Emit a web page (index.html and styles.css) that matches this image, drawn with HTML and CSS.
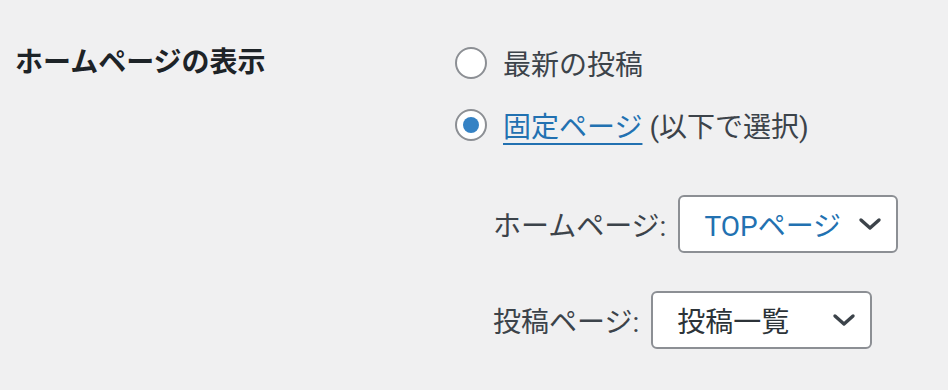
FILE: index.html
```html
<!DOCTYPE html>
<html lang="ja">
<head>
    <meta charset="UTF-8">
    <meta name="viewport" content="width=device-width, initial-scale=1.0">
    <title>表示設定</title>
    <link rel="stylesheet" href="styles.css">
</head>
<body>
    <div class="form-table">
        <div class="form-th">ホームページの表示</div>

        <div class="form-td">
            <div class="radio-list">
                <label class="radio-row">
                    <span class="radio"></span>
                    <span>最新の投稿</span>
                </label>
                <label class="radio-row">
                    <span class="radio checked"></span>
                    <span><a href="#" class="page-link">固定ページ</a> (以下で選択)</span>
                </label>
            </div>

            <ul class="page-selects">
                <li class="select-row">
                    <span class="select-label">ホームページ:</span>
                    <div class="select select-front">
                        <span class="select-value selected">TOPページ</span>
                        <svg class="chevron" viewBox="0 0 24 14" width="24" height="14">
                            <polyline points="3,3 12,11 21,3" />
                        </svg>
                    </div>
                </li>
                <li class="select-row">
                    <span class="select-label">投稿ページ:</span>
                    <div class="select select-posts">
                        <span class="select-value">投稿一覧</span>
                        <svg class="chevron" viewBox="0 0 24 14" width="24" height="14">
                            <polyline points="3,3 12,11 21,3" />
                        </svg>
                    </div>
                </li>
            </ul>
        </div>
    </div>
</body>
</html>
```

FILE: styles.css
```css
body {
    margin: 0;
    background-color: #f0f0f1;
    font-family: Roboto, "Noto Sans CJK JP", sans-serif;
    font-size: 28px;
    color: #3c434a;
}
.form-table {
    display: flex;
    padding: 47px 0 0 15px;
}
.form-th {
    width: 440px;
    font-weight: bold;
    color: #1d2327;
    line-height: 32px;
}
.form-td {
    display: flex;
    flex-direction: column;
}
.radio-list {
    display: flex;
    flex-direction: column;
    gap: 30px;
}
.radio-row {
    display: flex;
    align-items: center;
    height: 32px;
    gap: 16px;
}
.radio {
    width: 28px;
    height: 28px;
    border: 2px solid #8c8f94;
    border-radius: 50%;
    background-color: #fff;
    display: flex;
    align-items: center;
    justify-content: center;
}
.radio.checked::after {
    content: "";
    width: 16px;
    height: 16px;
    border-radius: 50%;
    background-color: #3582c4;
}
.page-link {
    color: #2271b1;
    text-decoration: underline;
    text-decoration-thickness: 2px;
    text-underline-offset: 6px;
}
.page-selects {
    list-style: none;
    margin: 54px 0 0 38px;
    padding: 0;
    display: flex;
    flex-direction: column;
    gap: 38px;
}
.select-row {
    display: flex;
    align-items: center;
    gap: 12px;
}
.select {
    box-sizing: border-box;
    width: 221px;
    height: 58px;
    border: 2px solid #8c8f94;
    border-radius: 6px;
    background-color: #fff;
    display: flex;
    align-items: center;
    justify-content: space-between;
    padding: 0 14px 0 24px;
    color: #2c3338;
}
.select-front {
    width: 220px;
}
.select-value.selected {
    color: #2271b1;
}
.chevron {
    fill: none;
    stroke: #3c434a;
    stroke-width: 3.4;
    stroke-linecap: round;
    stroke-linejoin: round;
}
```
